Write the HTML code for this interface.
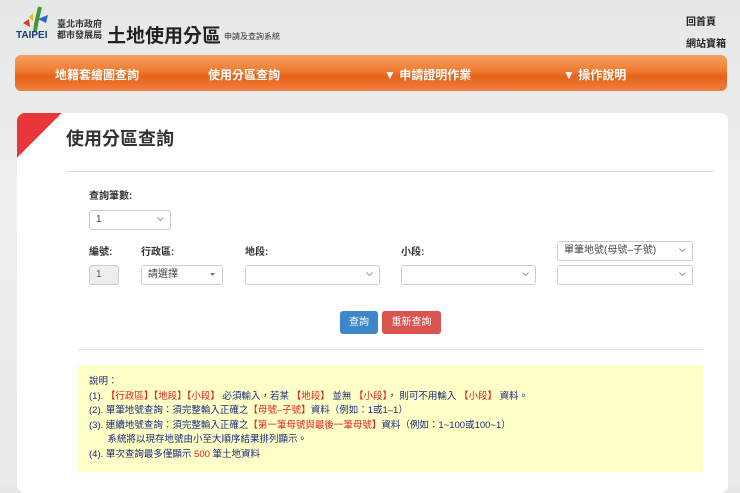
<!DOCTYPE html>
<html><head><meta charset="utf-8"><style>
*{margin:0;padding:0;box-sizing:border-box}
body{width:740px;height:487px;overflow:hidden;font-family:"Liberation Sans","Noto Sans CJK TC",sans-serif;background:linear-gradient(#e6e8e8,#eef0f0 40%,#e9ebeb);position:relative;color:#333}
.a{position:absolute}
.nav{left:15px;top:55px;width:712px;height:36px;border-radius:6px;background:linear-gradient(#f7a060,#f07a30 45%,#e5631a 60%,#f08040);color:#fff;font-weight:bold;font-size:12px}
.nav span{position:absolute;top:11px}
.card{left:17px;top:113px;width:711px;height:380px;background:#fff;border-radius:8px}
.sel{position:absolute;height:20px;border:1px solid #ccc;border-radius:3px;background:#fff;font-size:10px;line-height:18px;padding:0 6px;color:#444}
.sel svg{position:absolute;right:6px;top:6px}
.lbl{position:absolute;font-size:10px;font-weight:bold;color:#333}
.y{left:78px;top:365px;width:625px;height:107px;background:#ffffc8;font-size:9.5px;color:#1a2a7a;line-height:14.5px;padding:10px 0 0 11px}
.r{color:#e02020}
</style></head><body>
<svg class="a" style="left:18px;top:5px" width="32" height="28"><path d="M22 2 C20 10 18 18 17 26" stroke="#3a9a3a" stroke-width="4" fill="none"/><path d="M5 18 L11 14 L12 22Z" fill="#d33"/><path d="M11 12 L15 8 L15 16Z" fill="#f5b800"/><path d="M20 14 L30 10 L28 18Z" fill="#2a6ac0"/></svg>
<div class="a" style="left:16px;top:30px;font-size:10px;font-weight:bold;color:#1a3a7a">TAIPEI</div>
<div class="a" style="left:57px;top:19px;font-size:9px;line-height:11px;color:#333;font-weight:bold">臺北市政府<br>都市發展局</div>
<div class="a" style="left:107px;top:21px;font-size:19px;color:#222;font-weight:bold">土地使用分區</div>
<div class="a" style="left:224px;top:31px;font-size:8px;color:#333">申請及查詢系統</div>
<div class="a" style="left:686px;top:13px;font-size:10px;font-weight:bold;color:#222">回首頁</div>
<div class="a" style="left:686px;top:35px;font-size:10px;font-weight:bold;color:#222">網站寶箱</div>
<div class="a nav"><span style="left:40px">地籍套繪圖查詢</span><span style="left:193px">使用分區查詢</span><span style="left:369px">▼ 申請證明作業</span><span style="left:548px">▼ 操作說明</span></div>
<div class="a card"></div>
<div class="a" style="left:17px;top:113px;width:45px;height:45px;background:linear-gradient(135deg,#e8363a 50%,transparent 50%);border-top-left-radius:8px"></div>
<div class="a" style="left:66px;top:125px;font-size:18px;font-weight:bold;color:#333">使用分區查詢</div>
<div class="a" style="left:66px;top:171px;width:648px;height:1px;background:#ddd"></div>
<div class="lbl" style="left:89px;top:187px">查詢筆數:</div>
<div class="sel" style="left:89px;top:210px;width:82px">1<svg width="7" height="5"><path d="M.5 .5L3.5 3.5L6.5 .5" stroke="#999" fill="none"/></svg></div>
<div class="lbl" style="left:89px;top:243px">編號:</div>
<div class="lbl" style="left:141px;top:243px">行政區:</div>
<div class="lbl" style="left:245px;top:243px">地段:</div>
<div class="lbl" style="left:401px;top:243px">小段:</div>
<div class="sel" style="left:557px;top:241px;width:136px">單筆地號(母號–子號)<svg width="7" height="5"><path d="M.5 .5L3.5 3.5L6.5 .5" stroke="#999" fill="none"/></svg></div>
<div class="a" style="left:89px;top:265px;width:30px;height:20px;border:1px solid #ccc;border-radius:3px;background:#eee;font-size:10px;line-height:18px;padding:0 6px;color:#555">1</div>
<div class="sel" style="left:141px;top:265px;width:82px">請選擇<svg width="7" height="5"><path d="M1 1L6 1L3.5 4Z" fill="#777"/></svg></div>
<div class="sel" style="left:245px;top:265px;width:135px"><svg width="7" height="5"><path d="M.5 .5L3.5 3.5L6.5 .5" stroke="#999" fill="none"/></svg></div>
<div class="sel" style="left:401px;top:265px;width:135px"><svg width="7" height="5"><path d="M.5 .5L3.5 3.5L6.5 .5" stroke="#999" fill="none"/></svg></div>
<div class="sel" style="left:557px;top:265px;width:136px"><svg width="7" height="5"><path d="M.5 .5L3.5 3.5L6.5 .5" stroke="#999" fill="none"/></svg></div>
<div class="a" style="left:340px;top:311px;width:38px;height:23px;background:#3d87c9;border-radius:3px;color:#fff;font-size:10px;text-align:center;line-height:23px">查詢</div>
<div class="a" style="left:382px;top:311px;width:59px;height:23px;background:#d9534f;border-radius:3px;color:#fff;font-size:10px;text-align:center;line-height:23px">重新查詢</div>
<div class="a" style="left:78px;top:349px;width:625px;height:1px;background:#e5e5e5"></div>
<div class="a y">說明：<br>(1). <span class="r">【行政區】【地段】【小段】</span> 必須輸入，若某 <span class="r">【地段】</span> 並無 <span class="r">【小段】</span>， 則可不用輸入 <span class="r">【小段】</span> 資料。<br>(2). 單筆地號查詢：須完整輸入正確之<span class="r">【母號–子號】</span>資料（例如：1或1–1）<br>(3). 連續地號查詢：須完整輸入正確之<span class="r">【第一筆母號與最後一筆母號】</span>資料（例如：1~100或100~1）<br>&nbsp;&nbsp;&nbsp;&nbsp;&nbsp;&nbsp;&nbsp;系統將以現存地號由小至大順序結果排列顯示。<br>(4). 單次查詢最多僅顯示 <span class="r">500</span> 筆土地資料</div>
</body></html>
